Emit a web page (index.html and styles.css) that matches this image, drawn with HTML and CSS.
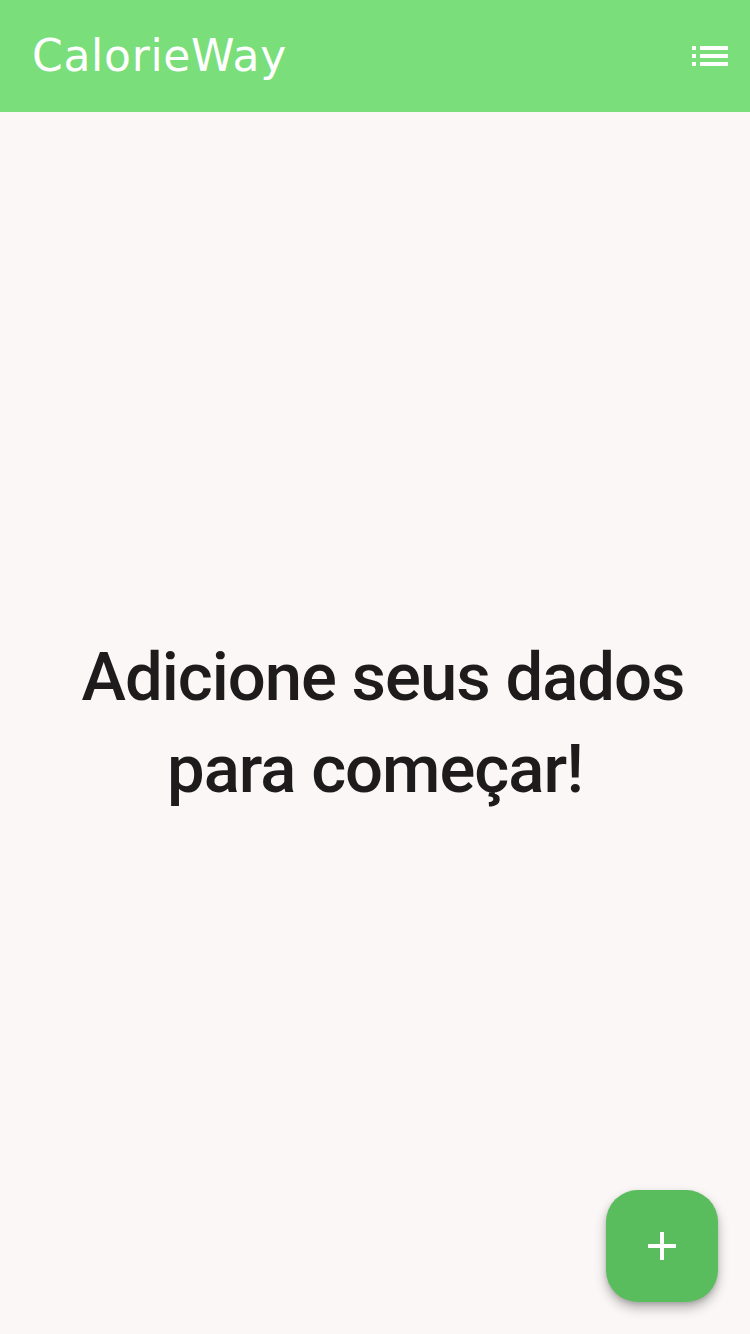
FILE: index.html
```html
<!DOCTYPE html>
<html lang="pt">
<head>
<meta charset="utf-8">
<title>CalorieWay</title>
<link rel="stylesheet" href="styles.css">
</head>
<body>
<div class="app">
  <header class="appbar">
    <h1 class="title">CalorieWay</h1>
    <button class="menu-btn" aria-label="Lista">
      <svg width="36" height="20" viewBox="0 0 36 20">
        <rect x="0" y="0" width="4" height="4" fill="#fff"/>
        <rect x="0" y="8" width="4" height="4" fill="#fff"/>
        <rect x="0" y="16" width="4" height="4" fill="#fff"/>
        <rect x="8" y="0" width="28" height="4" fill="#fff"/>
        <rect x="8" y="8" width="28" height="4" fill="#fff"/>
        <rect x="8" y="16" width="28" height="4" fill="#fff"/>
      </svg>
    </button>
  </header>
  <main class="content">
    <p class="empty"><span class="l1">Adicione seus dados</span><br>para começar!</p>
  </main>
  <button class="fab" aria-label="Adicionar">
    <svg width="28" height="28" viewBox="0 0 28 28">
      <rect x="0" y="12" width="28" height="4" fill="#fff"/>
      <rect x="12" y="0" width="4" height="28" fill="#fff"/>
    </svg>
  </button>
</div>
</body>
</html>
```
FILE: styles.css
```css
* { box-sizing: border-box; }
html, body { margin: 0; padding: 0; }
body {
  background: #faf7f6;
  font-family: Roboto, "Liberation Sans", sans-serif;
}
.app {
  width: 750px;
  height: 1334px;
  display: flex;
  flex-direction: column;
  position: relative;
  overflow: hidden;
}
.appbar {
  height: 112px;
  flex: 0 0 112px;
  background: #7ade7a;
  display: flex;
  align-items: center;
  justify-content: space-between;
  padding: 0 22px 0 32px;
}
.title {
  margin: 0;
  color: #fff;
  font-family: "DejaVu Sans", sans-serif;
  font-weight: 400;
  font-size: 44px;
  line-height: 1;
  letter-spacing: 0.7px;
}
.menu-btn {
  background: none;
  border: 0;
  padding: 0;
  width: 36px;
  height: 20px;
  display: block;
}
.menu-btn svg { display: block; }
.content {
  flex: 1;
  display: flex;
  align-items: center;
  justify-content: center;
}
.empty {
  margin: 0;
  text-align: center;
  color: #1d1b1b;
  font-family: Roboto, sans-serif;
  font-weight: 500;
  font-size: 67px;
  line-height: 92px;
  letter-spacing: -1px;
}
.l1 { padding-left: 16px; }
.fab {
  position: absolute;
  right: 32px;
  bottom: 32px;
  width: 112px;
  height: 112px;
  border-radius: 32px;
  border: 0;
  background: #5abd5d;
  box-shadow: 0 6px 12px rgba(0,0,0,0.28), 0 2px 4px rgba(0,0,0,0.12);
  display: flex;
  align-items: center;
  justify-content: center;
  padding: 0;
}
.fab svg { display: block; }
```
